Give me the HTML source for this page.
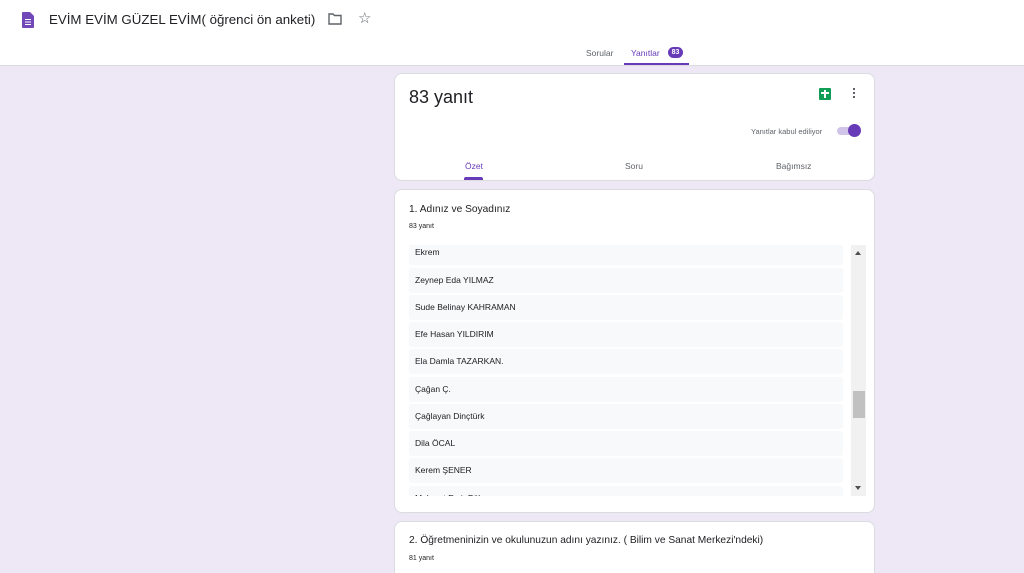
<!DOCTYPE html>
<html><head><meta charset="utf-8"><style>
*{margin:0;padding:0;box-sizing:border-box}
html,body{width:1024px;height:573px;overflow:hidden}
body{background:#ede7f6;font-family:"Liberation Sans",Arial,sans-serif;position:relative;color:#202124}
.hdr{position:absolute;left:0;top:0;width:1024px;height:66px;background:#fff;border-bottom:1px solid #dadce0}
.card{position:absolute;left:394px;width:481px;background:#fff;border-radius:8px;border:1px solid #dadce0}
.row{position:absolute;left:409px;width:434px;height:25px;background:#f8f9fa;border-radius:3px;font-size:8.5px;color:#202124;padding-left:6px;line-height:25px}
</style></head><body>
<div class="hdr">
<svg style="position:absolute;left:22px;top:12px" width="12" height="16" viewBox="0 0 12 16"><path d="M0 1a1 1 0 0 1 1-1h7l4 4v11a1 1 0 0 1-1 1H1a1 1 0 0 1-1-1z" fill="#7248b9"/><rect x="3" y="7" width="6" height="1" fill="#fff"/><rect x="3" y="9.5" width="6" height="1" fill="#fff"/><rect x="3" y="12" width="6" height="1" fill="#fff"/></svg>
<div style="position:absolute;left:49px;top:12px;font-size:13.3px;color:#202124;white-space:nowrap">EVİM EVİM GÜZEL EVİM( öğrenci ön anketi)</div>
<svg style="position:absolute;left:328px;top:13px" width="14" height="12" viewBox="0 0 14 12"><path d="M1 1h4l1.5 1.5H13v8.5H1z" fill="none" stroke="#5f6368" stroke-width="1.4"/></svg>
<div style="position:absolute;left:358px;top:9px;font-size:15px;color:#5f6368">☆</div>
<div style="position:absolute;left:586px;top:48px;font-size:8.5px;color:#5f6368">Sorular</div>
<div style="position:absolute;left:631px;top:48px;font-size:8.5px;color:#673ab7">Yanıtlar</div>
<div style="position:absolute;left:668px;top:47px;width:15px;height:11px;border-radius:6px;background:#673ab7;color:#fff;font-size:7px;font-weight:bold;text-align:center;line-height:11px">83</div>
<div style="position:absolute;left:624px;top:63px;width:65px;height:2px;background:#673ab7"></div>
</div>
<div class="card" style="top:73px;height:108px">
<div style="position:absolute;left:14px;top:13px;font-size:18px">83 yanıt</div>
<div style="position:absolute;left:424px;top:14px;width:12px;height:12px;background:#0f9d58;border-radius:1px"><div style="position:absolute;left:5px;top:2px;width:1.5px;height:8px;background:#fff"></div><div style="position:absolute;left:2px;top:4px;width:8px;height:1.5px;background:#fff"></div></div>
<div style="position:absolute;left:458px;top:14px;width:2px;height:2px;background:#5f6368;box-shadow:0 4px 0 #5f6368,0 8px 0 #5f6368"></div>
<div style="position:absolute;left:356px;top:53px;font-size:7.5px;color:#5f6368">Yanıtlar kabul ediliyor</div>
<div style="position:absolute;left:442px;top:53px;width:20px;height:8px;border-radius:4px;background:#d1c4e9"></div>
<div style="position:absolute;left:453px;top:50px;width:13px;height:13px;border-radius:50%;background:#673ab7"></div>
<div style="position:absolute;left:70px;top:87px;font-size:8.5px;color:#673ab7">Özet</div>
<div style="position:absolute;left:69px;top:103px;width:19px;height:3px;background:#673ab7;border-radius:2px 2px 0 0"></div>
<div style="position:absolute;left:230px;top:87px;font-size:8.5px;color:#5f6368">Soru</div>
<div style="position:absolute;left:381px;top:87px;font-size:8.5px;color:#5f6368">Bağımsız</div>
</div>
<div class="card" style="top:189px;height:324px">
<div style="position:absolute;left:14px;top:14px;font-size:10.2px">1. Adınız ve Soyadınız</div>
<div style="position:absolute;left:14px;top:33px;font-size:7px">83 yanıt</div>
</div>
<div style="position:absolute;left:405px;top:245px;width:445px;height:251px;overflow:hidden">
<div class="row" style="left:4px;top:-5px">Ekrem</div>
<div class="row" style="left:4px;top:23px">Zeynep Eda YILMAZ</div>
<div class="row" style="left:4px;top:50px">Sude Belinay KAHRAMAN</div>
<div class="row" style="left:4px;top:77px">Efe Hasan YILDIRIM</div>
<div class="row" style="left:4px;top:104px">Ela Damla TAZARKAN.</div>
<div class="row" style="left:4px;top:132px">Çağan Ç.</div>
<div class="row" style="left:4px;top:159px">Çağlayan Dinçtürk</div>
<div class="row" style="left:4px;top:186px">Dila ÖCAL</div>
<div class="row" style="left:4px;top:213px">Kerem ŞENER</div>
<div class="row" style="left:4px;top:241px">Mehmet Emir Pük</div>
</div>
<div style="position:absolute;left:851px;top:245px;width:15px;height:251px;background:#f1f1f1"></div>
<div style="position:absolute;left:855px;top:251px;border:3.5px solid transparent;border-bottom:4px solid #505050;border-top:0"></div>
<div style="position:absolute;left:855px;top:486px;border:3.5px solid transparent;border-top:4px solid #505050;border-bottom:0"></div>
<div style="position:absolute;left:853px;top:391px;width:12px;height:27px;background:#c1c1c1"></div>
<div class="card" style="top:521px;height:60px">
<div style="position:absolute;left:14px;top:13px;font-size:10.2px;white-space:nowrap">2. Öğretmeninizin ve okulunuzun adını yazınız. ( Bilim ve Sanat Merkezi'ndeki)</div>
<div style="position:absolute;left:14px;top:33px;font-size:7px">81 yanıt</div>
</div>
</body></html>
